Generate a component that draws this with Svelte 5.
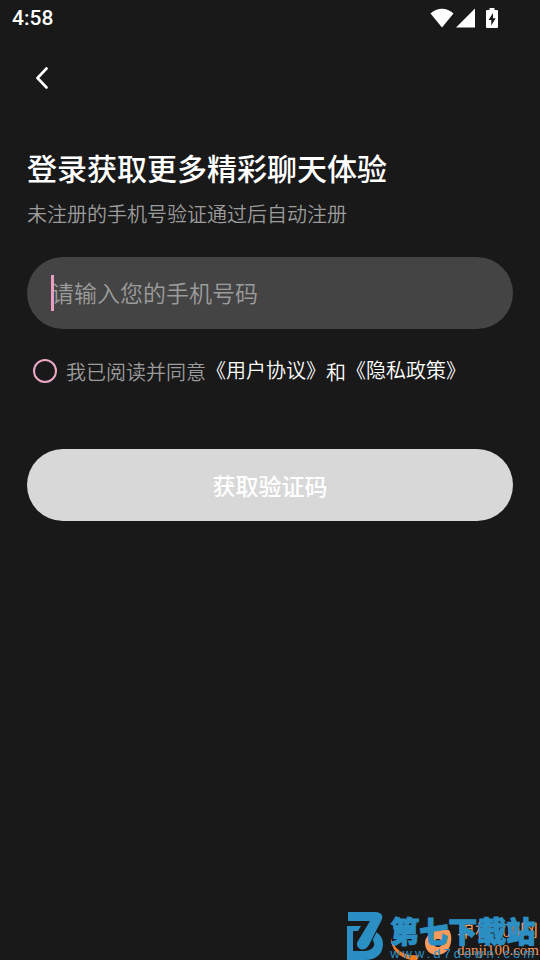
<script lang="ts">
	let phone = $state('');
	let agreed = $state(false);

	function submit(e: Event) {
		e.preventDefault();
	}
</script>

<div class="screen">
	<header class="status">
		<span>4:58</span>
		<div class="indicators">
			<svg width="24" height="20" viewBox="0 0 24 20" aria-hidden="true">
				<path d="M0.5 5.5C7 -1 17 -1 23.5 5.5L12 19.5z" />
			</svg>
			<svg width="19" height="20" viewBox="0 0 19 20" aria-hidden="true">
				<path d="M19 0.5V19.5H0z" />
			</svg>
			<svg class="battery" width="12" height="20" viewBox="0 0 12 20" aria-hidden="true">
				<path d="M3.5 0h5v2H11q1 0 1 1V19q0 1 -1 1H1q-1 0 -1 -1V3q0 -1 1 -1H3.5z" />
				<path class="bolt" d="M7 5L2.5 12H5.3V17.5L9.7 10.3H7z" />
			</svg>
		</div>
	</header>

	<nav>
		<button type="button" class="back" aria-label="返回">
			<svg width="12" height="22" viewBox="0 0 12 22" aria-hidden="true">
				<path d="M10.5 1.5L1.5 11L10.5 20.5" />
			</svg>
		</button>
	</nav>

	<main>
		<h1>登录获取更多精彩聊天体验</h1>
		<p>未注册的手机号验证通过后自动注册</p>

		<form onsubmit={submit}>
			<div class="field">
				<input type="tel" aria-label="手机号码" placeholder="请输入您的手机号码" bind:value={phone} />
				{#if !phone}
					<span class="caret"></span>
				{/if}
			</div>

			<div class="terms">
				<input type="checkbox" id="agree" bind:checked={agreed} />
				<label for="agree">我已阅读并同意</label>
				<a href="#agreement">《用户协议》</a>
				<span>和</span>
				<a href="#privacy">《隐私政策》</a>
			</div>

			<button type="submit" class="submit">获取验证码</button>
		</form>
	</main>

	<div class="mark danji">
		<svg width="64" height="34" viewBox="0 0 64 34" aria-hidden="true">
			<path class="swoosh" d="M0 12C3 23 12 31 29 29L26 34H20C8 31 0 24 0 12z" />
			<path
				class="ring"
				fill-rule="evenodd"
				d="M39 1Q44 1 49 4L58 4Q61 9 60 16C59 24 53 29 46 29C39 29 34 24 34 17C34 12 37 9 41 7zM43 17a4 4 0 1 0 8 0a4 4 0 1 0 -8 0z"
			/>
		</svg>
		<div>
			<span class="name">单机100网</span>
			<span class="host">danji100.com</span>
		</div>
	</div>
	<div class="mark seven">
		<svg width="36" height="48" viewBox="0 0 36 48" aria-hidden="true">
			<path
				d="M0 14H14L11 19H6V39H17C24 39 28 35 27 31Q26 28 25 27L29 20Q36 24 36 32C36 42 29 48 18 48H0z"
			/>
			<path
				class="digit"
				d="M1 0H27Q37 0 35 7Q34 10 32 13L22 33Q18 39 13 37Q8 34 11 29L23 9H1z"
			/>
		</svg>
		<div>
			<span class="name">第七下载站</span>
			<span class="host">www.d7down.com</span>
		</div>
	</div>
</div>

<style>
	:global(body) {
		margin: 0;
		background: #191919;
	}
	.screen {
		position: relative;
		min-height: 100vh;
		overflow: hidden;
		background: #191919;
		color: #fff;
		font-family: 'Noto Sans CJK SC', sans-serif;
	}
	.status {
		display: flex;
		justify-content: space-between;
		align-items: center;
		height: 36px;
		padding: 0 42px 0 12px;
		font-family: Roboto, sans-serif;
		font-size: 21px;
		font-weight: 500;
	}
	.indicators {
		display: flex;
		gap: 2px;
		fill: #fff;
	}
	.battery {
		margin-left: 9px;
	}
	.bolt {
		fill: #191919;
	}
	nav {
		display: flex;
		padding: 18px 24px;
	}
	.back {
		display: grid;
		place-items: center;
		width: 36px;
		height: 48px;
		padding: 0;
		border: none;
		background: none;
	}
	.back path {
		fill: none;
		stroke: #fff;
		stroke-width: 2.6;
		stroke-linecap: round;
		stroke-linejoin: round;
	}
	main {
		padding: 23px 27px;
	}
	h1 {
		margin: 0;
		font-size: 30px;
		font-weight: 500;
		line-height: 48px;
	}
	p {
		margin: 8px 0 28px;
		color: #9c9c9c;
		font-size: 20px;
		font-weight: 350;
		line-height: 30px;
	}
	.field {
		position: relative;
	}
	.field input {
		display: block;
		box-sizing: border-box;
		width: 100%;
		height: 72px;
		padding: 0 24px 3px;
		border: none;
		border-radius: 36px;
		outline: none;
		background: #444;
		color: #fff;
		font-family: inherit;
		font-size: 23px;
		font-weight: 350;
	}
	.field input::placeholder {
		color: #9c9c9c;
		opacity: 1;
	}
	.caret {
		position: absolute;
		top: 18px;
		left: 24px;
		width: 3px;
		height: 36px;
		background: #eb9fc0;
	}
	.terms {
		display: flex;
		align-items: center;
		height: 36px;
		margin: 24px 0 60px;
		padding-left: 6px;
		font-size: 20px;
		font-weight: 350;
		line-height: 32px;
	}
	.terms input {
		appearance: none;
		width: 24px;
		height: 24px;
		margin: 0 9px 0 0;
		border: 2px solid #eba8c5;
		border-radius: 50%;
	}
	.terms input:checked {
		background: #eba8c5;
	}
	.terms label {
		padding-top: 2px;
		color: #9c9c9c;
	}
	.terms span {
		padding-top: 2px;
	}
	.terms a {
		padding-bottom: 2px;
		color: #fff;
		text-decoration: none;
	}
	.submit {
		display: block;
		width: 100%;
		height: 72px;
		border: none;
		border-radius: 36px;
		background: #d8d8d8;
		color: #fff;
		font-family: inherit;
		font-size: 23px;
		font-weight: 500;
	}
	.mark {
		position: absolute;
		bottom: 0;
		display: flex;
		white-space: nowrap;
	}
	.mark span {
		display: block;
	}
	.danji {
		right: 1px;
		gap: 2px;
		align-items: flex-end;
		color: #f79a5c;
		font-family: 'Liberation Serif', 'Noto Sans CJK SC', serif;
	}
	.danji .name {
		font-size: 18px;
		line-height: 18px;
	}
	.danji .host {
		font-size: 15px;
		line-height: 20px;
	}
	.swoosh {
		fill: #f47b20;
	}
	.ring {
		fill: #f79a5c;
	}
	.seven {
		right: 3px;
		gap: 7px;
		color: #2b8fc4;
		fill: #2b8fc4;
	}
	.digit {
		stroke: #191919;
		stroke-width: 2;
		paint-order: stroke;
	}
	.seven .name {
		font-size: 29px;
		font-weight: 900;
		line-height: 36px;
		-webkit-text-stroke: 1px #2b8fc4;
	}
	.seven .host {
		font-family: 'Liberation Sans', sans-serif;
		font-size: 13px;
		letter-spacing: 3px;
		line-height: 12px;
	}
</style>
